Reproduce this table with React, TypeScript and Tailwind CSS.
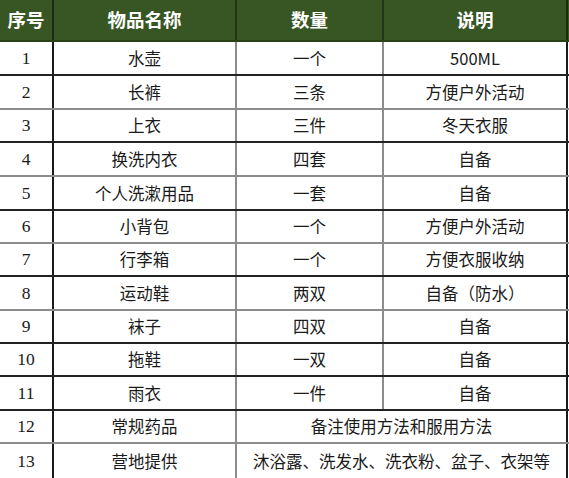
import React from "react";

type Row = { n: string; name: string; qty?: string; note: string; tall: boolean; line: "dark" | "gray" | "none"; span?: boolean };

const rows: Row[] = [
  { n: "1", name: "水壶", qty: "一个", note: "500ML", tall: true, line: "dark" },
  { n: "2", name: "长裤", qty: "三条", note: "方便户外活动", tall: true, line: "gray" },
  { n: "3", name: "上衣", qty: "三件", note: "冬天衣服", tall: false, line: "dark" },
  { n: "4", name: "换洗内衣", qty: "四套", note: "自备", tall: true, line: "gray" },
  { n: "5", name: "个人洗漱用品", qty: "一套", note: "自备", tall: true, line: "dark" },
  { n: "6", name: "小背包", qty: "一个", note: "方便户外活动", tall: false, line: "gray" },
  { n: "7", name: "行李箱", qty: "一个", note: "方便衣服收纳", tall: false, line: "dark" },
  { n: "8", name: "运动鞋", qty: "两双", note: "自备（防水）", tall: true, line: "gray" },
  { n: "9", name: "袜子", qty: "四双", note: "自备", tall: false, line: "dark" },
  { n: "10", name: "拖鞋", qty: "一双", note: "自备", tall: false, line: "dark" },
  { n: "11", name: "雨衣", qty: "一件", note: "自备", tall: true, line: "dark" },
  { n: "12", name: "常规药品", note: "备注使用方法和服用方法", tall: false, line: "gray", span: true },
  { n: "13", name: "营地提供", note: "沐浴露、洗发水、洗衣粉、盆子、衣架等", tall: true, line: "none", span: true },
];

const lineClass = {
  dark: "border-b-2 border-[#222222]",
  gray: "border-b-2 border-[#8c8c8c]",
  none: "",
};

export default function App() {
  return (
    <div className="w-[569px] h-[478px] bg-white overflow-hidden text-[#1a1a1a] font-['Noto_Sans_CJK_SC','Noto_Sans',sans-serif]">
      <div className="flex h-[42px] bg-[#375623] border-b-2 border-[#2a4218] text-white font-bold text-[18.5px]">
        <div className="w-[54px] flex items-center justify-center border-r-2 border-[#1d2b12]">序号</div>
        <div className="w-[183px] flex items-center justify-center border-r-2 border-[#24361a]">物品名称</div>
        <div className="w-[147px] flex items-center justify-center border-r-2 border-[#24361a]">数量</div>
        <div className="w-[184px] flex items-center justify-center border-r-2 border-[#1d2b12]">说明</div>
      </div>
      {rows.map((r) => (
        <div key={r.n} className={"flex text-[16.5px] " + (r.tall ? "h-[34px] " : "h-[33px] ") + lineClass[r.line]}>
          <div className="w-[54px] flex items-center justify-center border-r-2 border-[#1a1a1a] text-[17.5px] font-['Liberation_Serif','DejaVu_Serif',serif]">
            {r.n}
          </div>
          <div className="w-[183px] flex items-center justify-center border-r-2 border-[#8c8c8c]">{r.name}</div>
          {r.span ? (
            <div className="w-[331px] flex items-center justify-center border-r-2 border-[#1a1a1a]">{r.note}</div>
          ) : (
            <>
              <div className="w-[147px] flex items-center justify-center border-r-2 border-[#8c8c8c]">{r.qty}</div>
              <div className="w-[184px] flex items-center justify-center border-r-2 border-[#1a1a1a]">{r.note}</div>
            </>
          )}
        </div>
      ))}
    </div>
  );
}
